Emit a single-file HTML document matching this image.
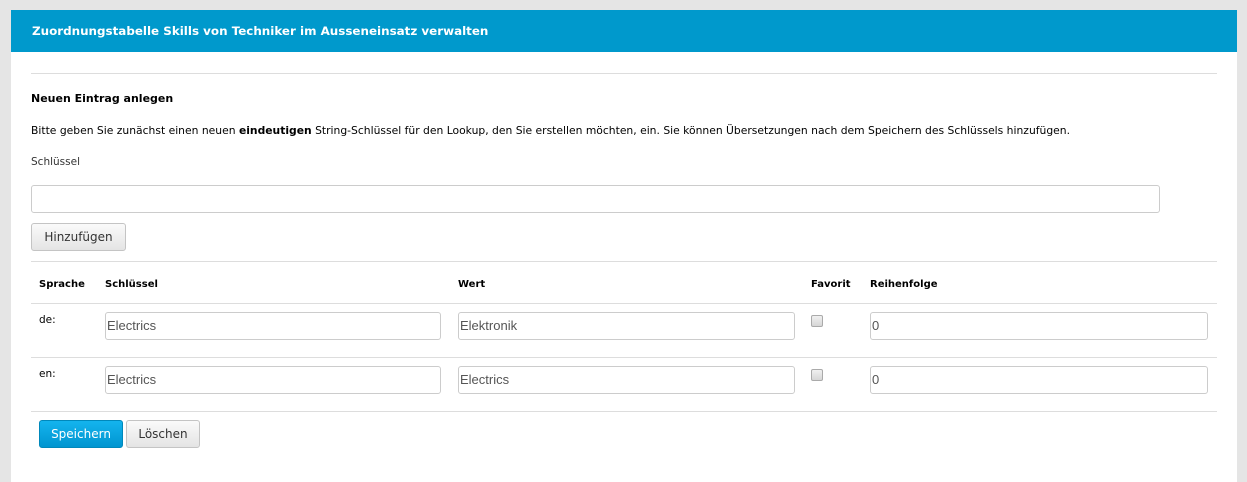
<!DOCTYPE html>
<html><head><meta charset="utf-8"><style>
*{box-sizing:border-box;margin:0;padding:0}
body{width:1247px;height:482px;background:#e5e5e5;position:relative;overflow:hidden;font-family:"DejaVu Sans",Verdana,sans-serif;color:#000}
.panel{position:absolute;left:11px;top:10px;width:1226px;height:472px;background:#fff}
.hd{position:absolute;left:11px;top:10px;width:1226px;height:42px;background:#0099cc;color:#fff;font-weight:bold;font-size:11.9px;line-height:42px;padding-left:21px;white-space:nowrap}
.a{position:absolute;white-space:nowrap}
.hr{position:absolute;left:31px;width:1186px;height:1px;background:#ddd}
.inp{position:absolute;height:28px;border:1px solid #ccc;border-radius:3px;background:#fff;font-family:"Liberation Sans",Arial,sans-serif;font-size:13px;color:#555;line-height:26px;padding-left:1px}
.btn{position:absolute;height:28px;border:1px solid #c4c4c4;border-radius:3px;background:linear-gradient(#fafafa,#e4e4e4);font-size:12px;color:#333;text-align:center;line-height:26px}
.cb{position:absolute;width:12px;height:12px;border:1px solid #aaa;border-radius:2px;background:linear-gradient(#f0f0f0,#d6d6d6)}
.th{font-weight:bold;font-size:10px;top:279px}
.sm{font-size:10.5px}
</style></head><body>
<div class="panel"></div>
<div class="hd">Zuordnungstabelle Skills von Techniker im Ausseneinsatz verwalten</div>
<div class="hr" style="top:73px"></div>
<div class="a" style="left:31px;top:92px;font-weight:bold;font-size:11px">Neuen Eintrag anlegen</div>
<div class="a sm" style="left:31px;top:124px;font-size:10.75px">Bitte geben Sie zunächst einen neuen <b>eindeutigen</b> String-Schlüssel für den Lookup, den Sie erstellen möchten, ein. Sie können Übersetzungen nach dem Speichern des Schlüssels hinzufügen.</div>
<div class="a sm" style="left:31px;top:156px;color:#333">Schlüssel</div>
<div class="inp" style="left:31px;top:185px;width:1129px"></div>
<div class="btn" style="left:31px;top:223px;width:95px">Hinzufügen</div>
<div class="hr" style="top:261px"></div>
<div class="a th" style="left:39px">Sprache</div>
<div class="a th" style="left:105px">Schlüssel</div>
<div class="a th" style="left:458px">Wert</div>
<div class="a th" style="left:811px">Favorit</div>
<div class="a th" style="left:870px">Reihenfolge</div>
<div class="hr" style="top:303px"></div>
<div class="a sm" style="left:39px;top:314px">de:</div>
<div class="inp" style="left:105px;top:312px;width:336px">Electrics</div>
<div class="inp" style="left:458px;top:312px;width:337px">Elektronik</div>
<div class="cb" style="left:811px;top:315px"></div>
<div class="inp" style="left:870px;top:312px;width:338px">0</div>
<div class="hr" style="top:357px"></div>
<div class="a sm" style="left:39px;top:368px">en:</div>
<div class="inp" style="left:105px;top:366px;width:336px">Electrics</div>
<div class="inp" style="left:458px;top:366px;width:337px">Electrics</div>
<div class="cb" style="left:811px;top:369px"></div>
<div class="inp" style="left:870px;top:366px;width:338px">0</div>
<div class="hr" style="top:411px"></div>
<div class="btn" style="left:39px;top:420px;width:84px;background:linear-gradient(#14b4ee,#0095d0);border-color:#0088bb;color:#fff">Speichern</div>
<div class="btn" style="left:126px;top:420px;width:74px">Löschen</div>
</body></html>
